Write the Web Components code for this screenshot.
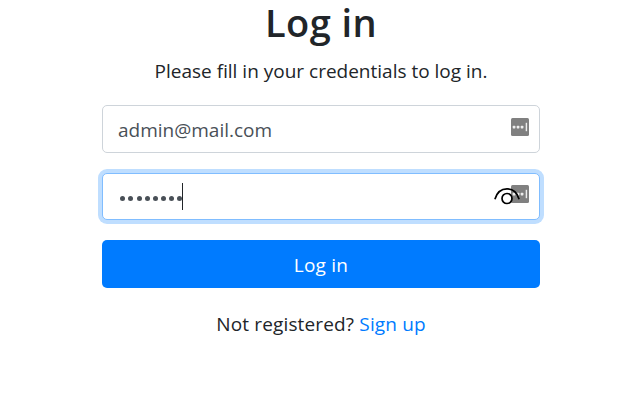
<!DOCTYPE html>
<html lang="en"><head><meta charset="utf-8"><title>Log in</title>
<style>body{margin:0;background:#fff;color:#212529;font:400 19px/30px "Open Sans","Noto Sans",sans-serif}</style></head>
<body><login-page></login-page>
<script>
class KeyIcon extends HTMLElement{
  constructor(){super();this.attachShadow({mode:'open'}).innerHTML=`
<style>:host{display:block;width:18px;height:18px}svg{display:block}</style>
<svg width="18" height="18" viewBox="0 0 18 18"><rect width="18" height="18" rx="1.5" fill="#808080"/><g fill="#eee"><rect x="1.7" y="7.7" width="2.7" height="2.7" rx=".7"/><rect x="5.7" y="7.7" width="2.7" height="2.7" rx=".7"/><rect x="9.7" y="7.7" width="2.7" height="2.7" rx=".7"/><rect x="14.7" y="4.8" width="1.4" height="8.4"/></g></svg>`}
}
customElements.define('key-icon',KeyIcon);
class EyeIcon extends HTMLElement{
  constructor(){super();this.attachShadow({mode:'open'}).innerHTML=`
<style>:host{display:block;width:26px;height:18px}svg{display:block}</style>
<svg width="26" height="18" viewBox="0 0 26 18" fill="none" stroke="#000" stroke-width="1.7"><path d="M.9 12.2C3 5.2 7.6 1.9 13 1.9S23 5.2 25.1 12.2"/><circle cx="13" cy="11.5" r="5"/></svg>`}
}
customElements.define('eye-icon',EyeIcon);
class FormField extends HTMLElement{
  constructor(){super();this.attachShadow({mode:'open'}).innerHTML=`
<style>
:host{display:flex;position:relative;box-sizing:border-box;height:48px;border:1px solid #ced4da;border-radius:5px;padding:0 10px 0 15px;align-items:center;justify-content:space-between;color:#495057;background:#fff}
:host([focused]){height:47px;border-color:#80bdff;box-shadow:0 0 0 4px #bfdeff}
.value{display:flex;align-items:center;padding-top:2px}
:host([focused]) .value{padding:0 0 0 1px}
key-icon{margin-bottom:4px}
:host([focused]) key-icon{margin-bottom:5px}
</style><div class="value"><slot></slot></div><key-icon></key-icon><slot name="overlay"></slot>`}
}
customElements.define('form-field',FormField);
class PrimaryButton extends HTMLElement{
  constructor(){super();this.attachShadow({mode:'open'}).innerHTML=`
<style>:host{display:block}button{display:block;width:100%;height:48px;border:0;border-radius:5px;background:#007bff;color:#fff;font:inherit;letter-spacing:.25px;padding:2px 0 0}</style>
<button><slot></slot></button>`}
}
customElements.define('primary-button',PrimaryButton);
class LoginPage extends HTMLElement{
  constructor(){super();this.attachShadow({mode:'open'}).innerHTML=`
<style>
:host{display:block;width:438px;margin-left:102px;height:407px}
h1{margin:0;font-size:38px;line-height:44px;font-weight:600;text-align:center;letter-spacing:.4px}
p{margin:0;text-align:center;white-space:nowrap}
.intro{margin-top:12px;height:49px}
form-field[focused]{margin:20px 0}
.dots{display:flex;gap:3.14px;padding:3px 0 0 1.3px}
.dots i{width:5px;height:5px;border-radius:50%;background:#495057}
.caret{width:1px;height:27px;background:#212529}
eye-icon{position:absolute;right:19px;top:13px}
.foot{margin-top:21px;letter-spacing:.15px}
a{color:#007bff;text-decoration:none}
</style>
<h1>Log in</h1>
<p class="intro">Please fill in your credentials to log in.</p>
<form-field>admin@mail.com</form-field>
<form-field focused><div class="dots"><i></i><i></i><i></i><i></i><i></i><i></i><i></i><i></i></div><div class="caret"></div><eye-icon slot="overlay"></eye-icon></form-field>
<primary-button>Log in</primary-button>
<p class="foot">Not registered? <a href="#">Sign up</a></p>`}
}
customElements.define('login-page',LoginPage);
</script></body></html>
